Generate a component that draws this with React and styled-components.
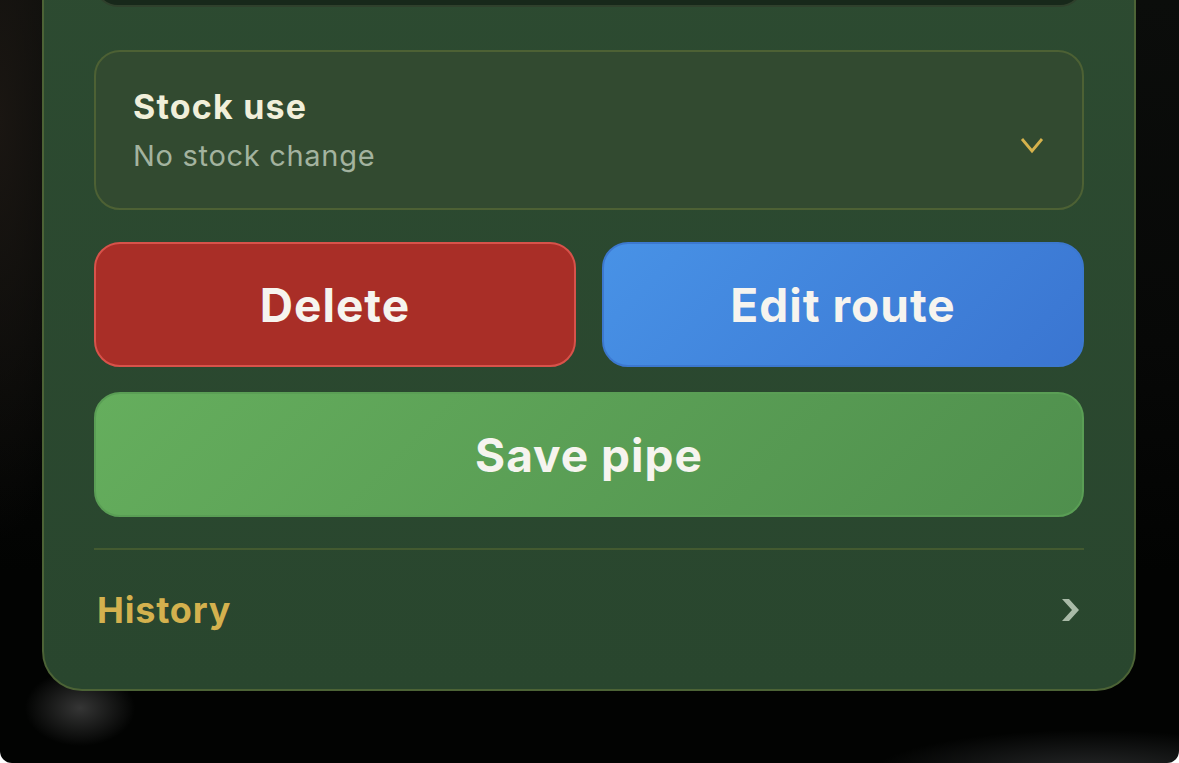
import React from 'react';
import styled, { createGlobalStyle } from 'styled-components';

const GlobalStyle = createGlobalStyle`
  html, body {
    margin: 0;
    padding: 0;
    background: #ffffff;
  }
  body {
    font-family: Inter, "Noto Sans", "Liberation Sans", sans-serif;
    -webkit-font-smoothing: antialiased;
  }
`;

const Backdrop = styled.div`
  height: 763px;
  overflow: hidden;
  display: flex;
  flex-direction: column;
  justify-content: flex-end;
  padding: 0 43px 72px 42px;
  box-sizing: border-box;
  border-radius: 0 0 12px 12px;
  background-color: #020302;
  background-image:
    radial-gradient(ellipse 55px 38px at 80px 708px, rgba(70, 70, 70, 0.75), transparent),
    radial-gradient(ellipse 220px 45px at 1090px 775px, rgba(58, 60, 62, 0.7), transparent),
    radial-gradient(ellipse 90px 420px at 0px 120px, #1a1612, transparent),
    linear-gradient(180deg, #0b0d0b 0%, #070807 45%, #020302 75%);
`;

const Panel = styled.div`
  flex-shrink: 0;
  display: flex;
  flex-direction: column;
  padding: 0 50px;
  border: 2px solid #4c6336;
  border-radius: 40px;
  background: linear-gradient(180deg, #2d4b31 0%, #29462e 100%);
`;

const NotesField = styled.div`
  height: 140px;
  border: 2px solid #2f402c;
  border-radius: 24px;
  background: #17281a;
  margin-bottom: 43px;
`;

const Select = styled.div`
  display: flex;
  align-items: center;
  justify-content: space-between;
  height: 160px;
  box-sizing: border-box;
  padding: 0 38px 0 37px;
  border: 2px solid #4d6134;
  border-radius: 26px;
  background: #324a30;
`;

const SelectText = styled.div`
  display: flex;
  flex-direction: column;
  gap: 11px;
`;

const SelectLabel = styled.span`
  font-size: 34px;
  line-height: 40px;
  font-weight: 700;
  letter-spacing: 1.2px;
  color: #f1efda;
`;

const SelectValue = styled.span`
  font-size: 29px;
  line-height: 36px;
  font-weight: 400;
  letter-spacing: 0.7px;
  color: #a3b39f;
`;

const ChevronDown = styled.svg`
  width: 24px;
  height: 18px;
  margin-top: 30px;
`;

const ButtonRow = styled.div`
  display: grid;
  grid-template-columns: 1fr 1fr;
  gap: 26px;
  margin-top: 32px;
`;

const tones = {
  danger: 'background: #a92e27; border-color: #d8524a;',
  primary: 'background: linear-gradient(135deg, #4892e6 0%, #3a75d1 100%); border-color: #3c78cf;',
  success: 'background: linear-gradient(135deg, #65ae5d 0%, #4f8f4d 100%); border-color: #5a9e55;',
};

const ActionButton = styled.button`
  height: 125px;
  border: 2px solid transparent;
  border-radius: 26px;
  font-family: Inter, "Noto Sans", "Liberation Sans", sans-serif;
  font-size: 46px;
  font-weight: 700;
  letter-spacing: 1px;
  color: #f6f4ef;
  cursor: pointer;
  ${(p) => tones[p.$tone]}
`;

const SaveButton = styled(ActionButton)`
  width: 100%;
  margin-top: 25px;
`;

const Divider = styled.hr`
  margin: 31px 0 0;
  border: none;
  height: 2px;
  background: #435a30;
`;

const HistoryRow = styled.div`
  display: flex;
  align-items: center;
  justify-content: space-between;
  height: 120px;
  padding: 0 3px 0 3px;
  margin-bottom: 19px;
`;

const HistoryLabel = styled.span`
  font-size: 36px;
  font-weight: 700;
  letter-spacing: 0.8px;
  color: #d4b14e;
`;

const ChevronRight = styled.svg`
  width: 18px;
  height: 22px;
  margin-right: 1px;
`;

export default function App() {
  return (
    <>
      <GlobalStyle />
      <Backdrop>
        <Panel>
          <NotesField />
          <Select>
            <SelectText>
              <SelectLabel>Stock use</SelectLabel>
              <SelectValue>No stock change</SelectValue>
            </SelectText>
            <ChevronDown viewBox="0 0 24 18">
              <polyline points="2,3 12,15 22,3" fill="none" stroke="#d6b24c" strokeWidth="2.8" />
            </ChevronDown>
          </Select>
          <ButtonRow>
            <ActionButton $tone="danger">Delete</ActionButton>
            <ActionButton $tone="primary">Edit route</ActionButton>
          </ButtonRow>
          <SaveButton $tone="success">Save pipe</SaveButton>
          <Divider />
          <HistoryRow>
            <HistoryLabel>History</HistoryLabel>
            <ChevronRight viewBox="0 0 18 22">
              <polygon points="0,0 7,0 17,11 7,22 0,22 10,11" fill="#a9baa7" />
            </ChevronRight>
          </HistoryRow>
        </Panel>
      </Backdrop>
    </>
  );
}
